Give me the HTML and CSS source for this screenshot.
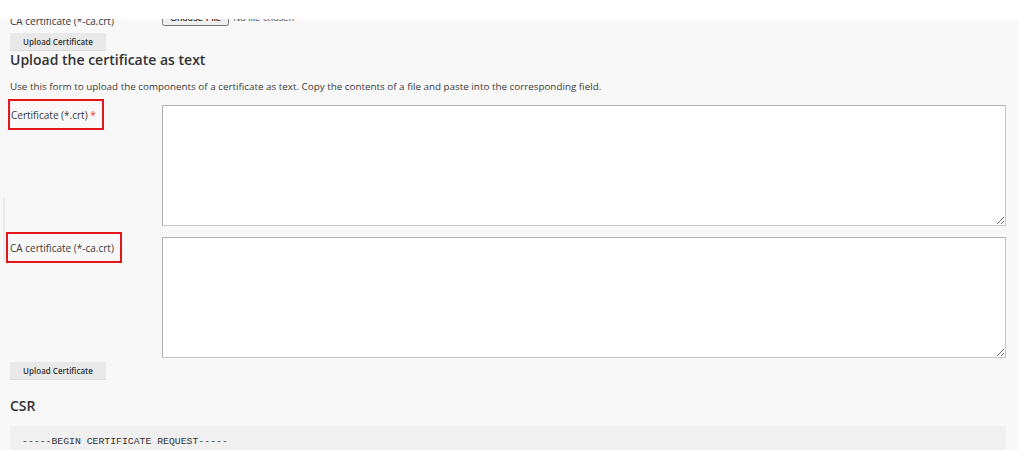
FILE: index.html
```html
<!DOCTYPE html>
<html>
<head>
<meta charset="utf-8">
<link rel="stylesheet" href="styles.css">
</head>
<body>
<div class="topbar"></div>
<main class="page">
  <div class="file-row">
    <label class="lbl">CA certificate (*-ca.crt)</label>
    <input class="file" type="file">
  </div>
  <button class="btn btn-first">Upload Certificate</button>

  <h2 class="title">Upload the certificate as text</h2>
  <p class="desc">Use this form to upload the components of a certificate as text. Copy the contents of a file and paste into the corresponding field.</p>

  <div class="field field-1">
    <div class="lbl-cell">
      <label class="lbl">Certificate (*.crt) <span class="req">*</span></label>
      <span class="mark mark-1"></span>
    </div>
    <textarea class="ta"></textarea>
  </div>
  <div class="field field-2">
    <div class="lbl-cell lbl-cell-2">
      <label class="lbl">CA certificate (*-ca.crt)</label>
      <span class="mark mark-2"></span>
    </div>
    <textarea class="ta"></textarea>
  </div>
  <button class="btn btn-second">Upload Certificate</button>

  <h2 class="title csr">CSR</h2>
  <pre class="code">-----BEGIN CERTIFICATE REQUEST-----</pre>
  <span class="edge"></span>
</main>
</body>
</html>
```

FILE: styles.css
```css
html, body {
  margin: 0;
  padding: 0;
  background: #f8f8f8;
  overflow: hidden;
}
body {
  font-family: "Open Sans", "Noto Sans", sans-serif;
  color: #3a3a3a;
  font-size: 10px;
}
.topbar {
  position: fixed;
  top: 0;
  left: 0;
  right: 0;
  height: 19px;
  background: #fff;
  z-index: 5;
}
.page {
  position: relative;
  padding: 0 12px 0 10px;
}
.file-row {
  display: grid;
  grid-template-columns: 152px auto;
  align-items: end;
  height: 27px;
}
.file-row .lbl {
  line-height: 12px;
}
.file {
  font-family: "Liberation Sans", sans-serif;
  font-size: 9.6px;
  color: #555;
  margin-bottom: 1px;
}
.btn {
  display: block;
  width: 96px;
  height: 18px;
  padding: 0;
  border: 0;
  background: #e9e9e9;
  font-family: "Open Sans", sans-serif;
  font-weight: 600;
  font-size: 8px;
  color: #333;
  border-bottom: 1px solid #dcdcdc;
}
.btn-first {
  margin-top: 6px;
}
.title {
  margin: 0;
  font-size: 14px;
  font-weight: 600;
  line-height: 18px;
  color: #333;
}
.desc {
  margin: 11px 0 0;
  line-height: 13px;
  font-size: 9.85px;
}
.field {
  display: grid;
  grid-template-columns: 152px 1fr;
}
.field-1 {
  margin-top: 12px;
}
.field-2 {
  margin-top: 11px;
}
.lbl-cell {
  position: relative;
  padding-top: 3px;
  padding-left: 1px;
}
.lbl-cell-2 {
  padding-top: 4px;
  padding-left: 0;
}
.lbl {
  font-size: 10px;
  line-height: 12px;
}
.req {
  color: #e8383d;
}
.mark {
  position: absolute;
  border: 2px solid #e3161c;
  box-sizing: border-box;
}
.mark-1 {
  left: -2px;
  top: -6px;
  width: 96px;
  height: 31px;
}
.mark-2 {
  left: -4px;
  top: -5px;
  width: 116px;
  height: 31px;
}
.ta {
  display: block;
  box-sizing: border-box;
  width: 100%;
  height: 121px;
  margin: 0;
  background: #fff;
  border: 1px solid #c6c6c6;
  border-top-color: #b0b0b0;
  border-left-color: #b0b0b0;
  border-radius: 1px;
}
.btn-second {
  margin-top: 4px;
}
.csr {
  margin-top: 17px;
}
.code {
  margin: 11px 0 0;
  background: #f0f0f0;
  padding: 10px 12px 20px;
  font-family: "Liberation Mono", monospace;
  font-size: 9.8px;
  line-height: 12px;
  color: #333;
}
.edge {
  position: absolute;
  left: 3px;
  top: 198px;
  width: 2px;
  height: 64px;
  background: #ececec;
}
```
